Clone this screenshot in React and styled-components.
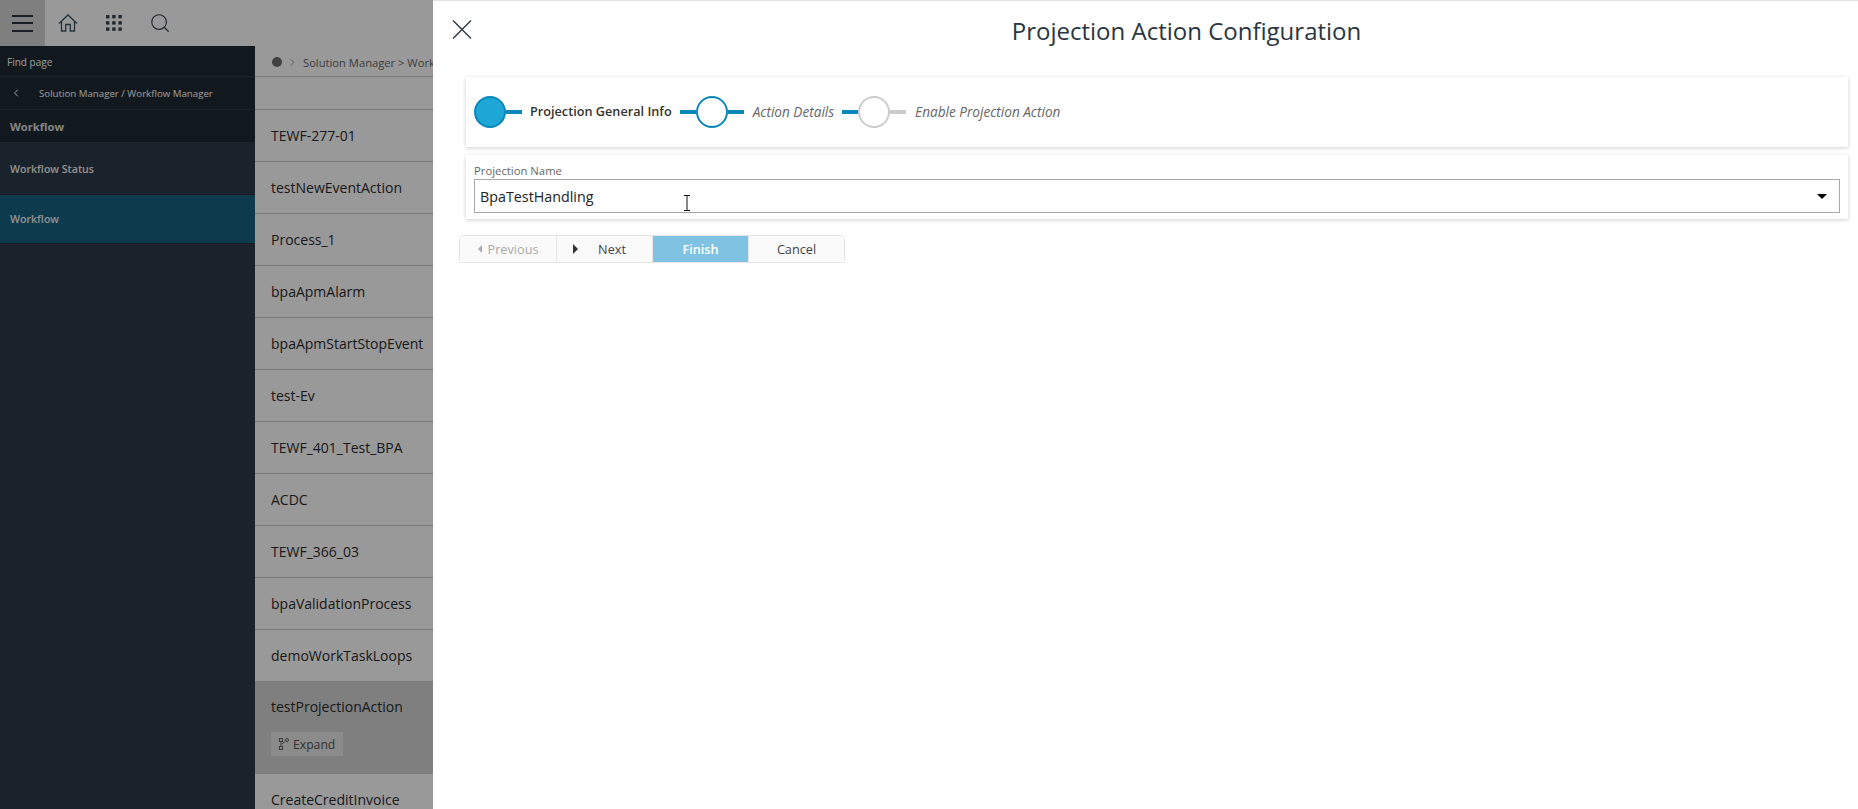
import styled, { createGlobalStyle } from 'styled-components';
import { ChevronLeft, ChevronRight, Search } from 'lucide-react';

const GlobalStyle = createGlobalStyle`
	html, body {
		margin: 0;
		height: 100%;
		overflow: hidden;
		font-family: 'Open Sans', sans-serif;
		background: #fff;
	}
	* {
		box-sizing: border-box;
	}
`;

const Page = styled.div`
	position: relative;
	width: 100%;
	height: 100vh;
	overflow: hidden;
	display: flex;
	flex-direction: column;
`;

const TopBar = styled.div`
	display: flex;
	align-items: center;
	height: 46px;
	background: #fff;
	flex-shrink: 0;
`;

const MenuButton = styled.div`
	width: 45px;
	height: 46px;
	background: #d4d4d4;
	display: flex;
	flex-direction: column;
	justify-content: center;
	gap: 5.5px;
	padding: 0 12px;
	span {
		display: block;
		height: 2px;
		background: #2a3440;
	}
`;

const TopIcon = styled.div`
	width: 46px;
	height: 46px;
	display: flex;
	align-items: center;
	justify-content: center;
	color: #3a5568;
`;

const Body = styled.div`
	display: flex;
	flex: 1;
	min-height: 0;
`;

const Sidebar = styled.div`
	width: 255px;
	flex-shrink: 0;
	background: #2c3a48;
	color: #fff;
`;

const SideDark = styled.div`
	display: flex;
	align-items: center;
	height: ${(props) => props.$height}px;
	background: #1e2b32;
	border-bottom: 1px solid #2e3c45;
	padding-left: ${(props) => props.$indent}px;
	font-size: ${(props) => props.$size || 10}px;
	font-weight: ${(props) => props.$weight || 400};
	color: ${(props) => props.$color || '#fff'};
	white-space: nowrap;
`;

const FindPage = styled(SideDark)`
	padding-top: 2px;
`;

const BackIcon = styled.span`
	display: flex;
	width: 29px;
	margin-left: -2px;
`;

const SideItem = styled.div`
	display: flex;
	align-items: center;
	height: ${(props) => props.$height}px;
	padding-left: 10px;
	font-size: 10.6px;
	font-weight: 600;
	color: #f0f0f0;
	background: ${(props) => (props.$active ? '#166181' : '#2c3a48')};
	border-bottom: 1px solid #26323d;
`;

const Main = styled.div`
	flex: 1;
	min-width: 0;
	background: #fff;
`;

const Breadcrumb = styled.div`
	display: flex;
	align-items: center;
	height: 31px;
	padding: 2px 0 0 17px;
	font-size: 11.2px;
	color: #666;
	border-bottom: 1px solid #ccc;
	white-space: nowrap;
`;

const Dot = styled.span`
	width: 10px;
	height: 10px;
	border-radius: 50%;
	background: #6d6d6d;
	margin-right: 5px;
`;

const Crumbs = styled.span`
	margin-left: 5px;
`;

const Spacer = styled.div`
	height: 33px;
	border-bottom: 1px solid #ccc;
`;

const Row = styled.div`
	height: ${(props) => (props.$selected ? 92 : 52)}px;
	padding: ${(props) => (props.$selected ? '15px' : '0')} 16px 0;
	display: ${(props) => (props.$selected ? 'block' : 'flex')};
	align-items: center;
	font-size: 14px;
	color: #2b2b2b;
	background: ${(props) => (props.$selected ? '#d4d4d4' : 'transparent')};
	border-bottom: 1px solid #ccc;
`;

const ExpandButton = styled.div`
	display: inline-flex;
	align-items: center;
	gap: 4px;
	height: 24px;
	margin-top: 16px;
	padding: 0 8px;
	font-size: 12.2px;
	color: #555;
	background: #e8e8e8;
`;

const Scrim = styled.div`
	position: absolute;
	inset: 0;
	background: rgba(0, 0, 0, 0.4);
`;

const Panel = styled.div`
	position: absolute;
	top: 0;
	right: 0;
	bottom: 0;
	width: 1425px;
	background: #fff;
	border-top: 1px solid #e2e2e2;
	padding: 0 10px 0 26px;
`;

const PanelHeader = styled.div`
	position: relative;
	display: flex;
	justify-content: center;
	align-items: center;
	height: 60px;
	margin-bottom: 16px;
	padding-left: 66px;
`;

const CloseButton = styled.svg`
	position: absolute;
	left: -7px;
	top: 19px;
	color: #2b3640;
`;

const Title = styled.h1`
	margin: 0;
	font-size: 24px;
	line-height: 52px;
	font-weight: 400;
	color: #2a3640;
`;

const Card = styled.div`
	background: #fff;
	margin-left: 7px;
	box-shadow: 0 1px 4px rgba(0, 0, 0, 0.2);
`;

const StepCard = styled(Card)`
	display: flex;
	align-items: center;
	height: 70px;
	padding-left: 8px;
`;

const Step = styled.div`
	display: flex;
	align-items: center;
	margin-right: 8px;
`;

const Lead = styled.span`
	width: 16px;
	height: 4px;
	background: #0a87bb;
`;

const Tail = styled.span`
	width: 16px;
	height: 4px;
	background: ${(props) => (props.$off ? '#cccccc' : '#0a87bb')};
`;

const Circle = styled.span`
	width: 32px;
	height: 32px;
	border-radius: 50%;
	background: ${(props) => (props.$done ? '#1ea7d6' : '#fff')};
	border: 2px solid ${(props) => (props.$off ? '#cccccc' : '#0a87bb')};
`;

const StepLabel = styled.span`
	margin: -2px 0 0 ${(props) => (props.$current ? 8 : 9)}px;
	font-size: ${(props) => (props.$current ? 12.7 : 13.6)}px;
	font-weight: ${(props) => (props.$current ? 600 : 400)};
	font-style: ${(props) => (props.$current ? 'normal' : 'italic')};
	color: ${(props) => (props.$current ? '#333' : '#666')};
`;

const FieldCard = styled(Card)`
	height: 64px;
	margin-top: 8px;
	padding: 8px 8px 0 8px;
`;

const FieldLabel = styled.div`
	font-size: 11.3px;
	line-height: 15px;
	margin-bottom: 1px;
	color: #666;
`;

const SelectBox = styled.div`
	position: relative;
	display: flex;
	align-items: center;
	height: 34px;
	padding-left: 5px;
	border: 1px solid #a8a8a8;
	font-size: 14.3px;
	color: #222;
`;

const Caret = styled.span`
	position: absolute;
	right: 12px;
	top: 14px;
	border-left: 5px solid transparent;
	border-right: 5px solid transparent;
	border-top: 5px solid #000;
`;

const TextCursor = styled.svg`
	position: absolute;
	left: 208px;
	top: 15px;
`;

const ButtonGroup = styled.div`
	display: grid;
	grid-template-columns: repeat(4, 1fr);
	width: 386px;
	height: 28px;
	margin-top: 16px;
	border: 1px solid #e6e6e6;
	border-radius: 3px;
	overflow: hidden;
`;

const WizardButton = styled.div`
	display: flex;
	align-items: center;
	justify-content: center;
	gap: ${(props) => props.$gap || 0}px;
	padding-right: ${(props) => props.$trim || 0}px;
	font-size: 12.7px;
	background: ${(props) => (props.$primary ? '#7fc2e1' : '#fafafa')};
	color: ${(props) => (props.$primary ? '#fff' : props.$disabled ? '#aaa' : '#444')};
	font-weight: ${(props) => (props.$primary ? 600 : 400)};
	border-left: ${(props) => (props.$first ? 'none' : '1px solid #e6e6e6')};
`;

const Arrow = styled.span`
	border-top: ${(props) => (props.$left ? 4 : 5)}px solid transparent;
	border-bottom: ${(props) => (props.$left ? 4 : 5)}px solid transparent;
	${(props) => (props.$left ? 'border-right: 4px solid #aaa;' : 'border-left: 5px solid #333;')}
`;

const rows = [
	'TEWF-277-01',
	'testNewEventAction',
	'Process_1',
	'bpaApmAlarm',
	'bpaApmStartStopEvent',
	'test-Ev',
	'TEWF_401_Test_BPA',
	'ACDC',
	'TEWF_366_03',
	'bpaValidationProcess',
	'demoWorkTaskLoops'
];

const HomeIcon = () => (
	<svg width="20" height="18" viewBox="0 0 20 18" fill="none" stroke="currentColor" strokeWidth="1.3">
		<path d="M1 9.5L10 1l9 8.5M3.5 7.5v9.5h4.2v-6.5h4.6V17h4.2V7.5" />
	</svg>
);

const GridIcon = () => (
	<svg width="16" height="16" viewBox="0 0 16 16" fill="#3a4450">
		{[0, 6.2, 12.4].map((y) =>
			[0, 6.2, 12.4].map((x) => <rect key={`${x}-${y}`} x={x} y={y} width="3.4" height="3.4" />)
		)}
	</svg>
);

const FlowIcon = () => (
	<svg width="10" height="12" viewBox="0 0 10 12" fill="none" stroke="#666" strokeWidth="1">
		<rect x="0.5" y="0.5" width="3" height="3" />
		<rect x="0.5" y="8.5" width="3" height="3" />
		<circle cx="8" cy="2" r="1.5" />
		<path d="M2 4v4M6.5 3L3 6" />
	</svg>
);

const App = () => {
	return (
		<Page>
			<GlobalStyle />
			<TopBar>
				<MenuButton>
					<span />
					<span />
					<span />
				</MenuButton>
				<TopIcon>
					<HomeIcon />
				</TopIcon>
				<TopIcon>
					<GridIcon />
				</TopIcon>
				<TopIcon>
					<Search size={22} strokeWidth={1.3} color="#3a4450" />
				</TopIcon>
			</TopBar>
			<Body>
				<Sidebar>
					<FindPage $height={31} $indent={7}>
						Find page
					</FindPage>
					<SideDark $height={33} $indent={12} $size={9.7}>
						<BackIcon>
							<ChevronLeft size={12} />
						</BackIcon>
						Solution Manager / Workflow Manager
					</SideDark>
					<SideDark $height={33} $indent={10} $size={11.2} $weight={700} $color="#ddd">
						Workflow
					</SideDark>
					<SideItem $height={52}>Workflow Status</SideItem>
					<SideItem $height={49} $active>
						Workflow
					</SideItem>
				</Sidebar>
				<Main>
					<Breadcrumb>
						<Dot />
						<ChevronRight size={11} strokeWidth={1.4} />
						<Crumbs>Solution Manager &gt; Workflow Manager</Crumbs>
					</Breadcrumb>
					<Spacer />
					{rows.map((name) => (
						<Row key={name}>{name}</Row>
					))}
					<Row $selected>
						testProjectionAction
						<br />
						<ExpandButton>
							<FlowIcon />
							Expand
						</ExpandButton>
					</Row>
					<Row>CreateCreditInvoice</Row>
				</Main>
			</Body>
			<Scrim />
			<Panel>
				<PanelHeader>
					<CloseButton width="20" height="19" viewBox="0 0 20 19" fill="none" stroke="currentColor" strokeWidth="1.4">
						<path d="M1 .5l18 18M19 .5l-18 18" />
					</CloseButton>
					<Title>Projection Action Configuration</Title>
				</PanelHeader>
				<StepCard>
					<Step>
						<Circle $done />
						<Tail />
						<StepLabel $current>Projection General Info</StepLabel>
					</Step>
					<Step>
						<Lead />
						<Circle />
						<Tail />
						<StepLabel>Action Details</StepLabel>
					</Step>
					<Step>
						<Lead />
						<Circle $off />
						<Tail $off />
						<StepLabel>Enable Projection Action</StepLabel>
					</Step>
				</StepCard>
				<FieldCard>
					<FieldLabel>Projection Name</FieldLabel>
					<SelectBox>
						BpaTestHandling
						<Caret />
						<TextCursor width="8" height="16" viewBox="0 0 8 16" fill="none" stroke="#111" strokeWidth="1">
							<path d="M1 .5h6M4 .5v15M1 15.5h6" />
						</TextCursor>
					</SelectBox>
				</FieldCard>
				<ButtonGroup>
					<WizardButton $first $disabled $gap={6}>
						<Arrow $left />
						Previous
					</WizardButton>
					<WizardButton $gap={20} $trim={10}>
						<Arrow />
						Next
					</WizardButton>
					<WizardButton $primary>Finish</WizardButton>
					<WizardButton>Cancel</WizardButton>
				</ButtonGroup>
			</Panel>
		</Page>
	);
};

export default App;
